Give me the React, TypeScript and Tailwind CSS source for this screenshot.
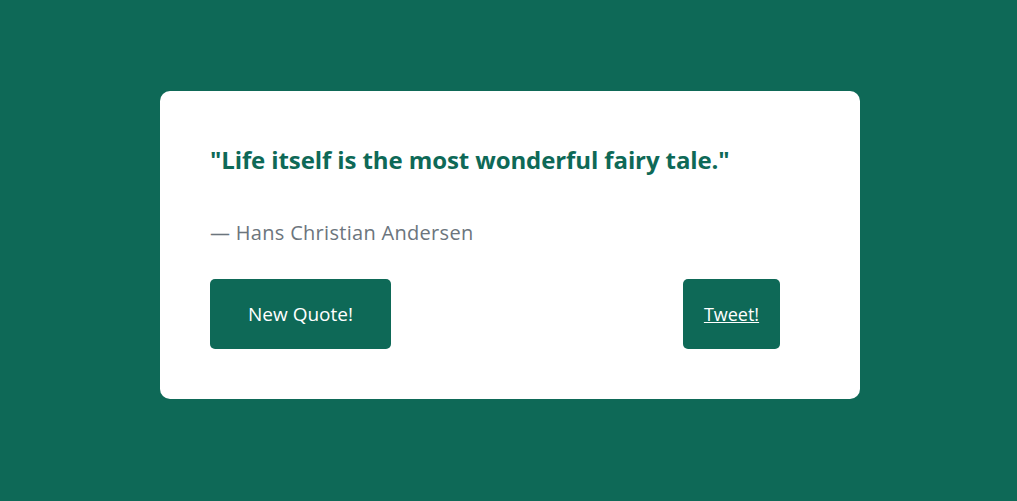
import React from 'react';

const App = () => {
    return (
        <div className="min-h-[501px] w-full bg-[#0e6957] pt-[91px] pl-[3px]">
            <div className="mx-auto w-[700px] rounded-[10px] bg-white px-[50px] pt-[50px] pb-[50px] font-['Open_Sans',sans-serif]">
                <p className="text-[24px] font-bold leading-[38px] text-[#0e6957] tracking-[-0.1px]">
                    "Life itself is the most wonderful fairy tale."
                </p>
                <p className="mt-[38px] text-[20px] leading-[32px] text-[#6c757d] tracking-[0.3px]">
                    — Hans Christian Andersen
                </p>
                <div className="mt-[30px] flex items-center justify-between pr-[30px]">
                    <button className="h-[70px] w-[181px] rounded-[5px] bg-[#0e6957] text-[19px] text-white">
                        New Quote!
                    </button>
                    <a href="#" className="flex h-[70px] w-[97px] items-center justify-center rounded-[5px] bg-[#0e6957] text-[18px] text-white underline">
                        Tweet!
                    </a>
                </div>
            </div>
        </div>
    );
};

export default App;
